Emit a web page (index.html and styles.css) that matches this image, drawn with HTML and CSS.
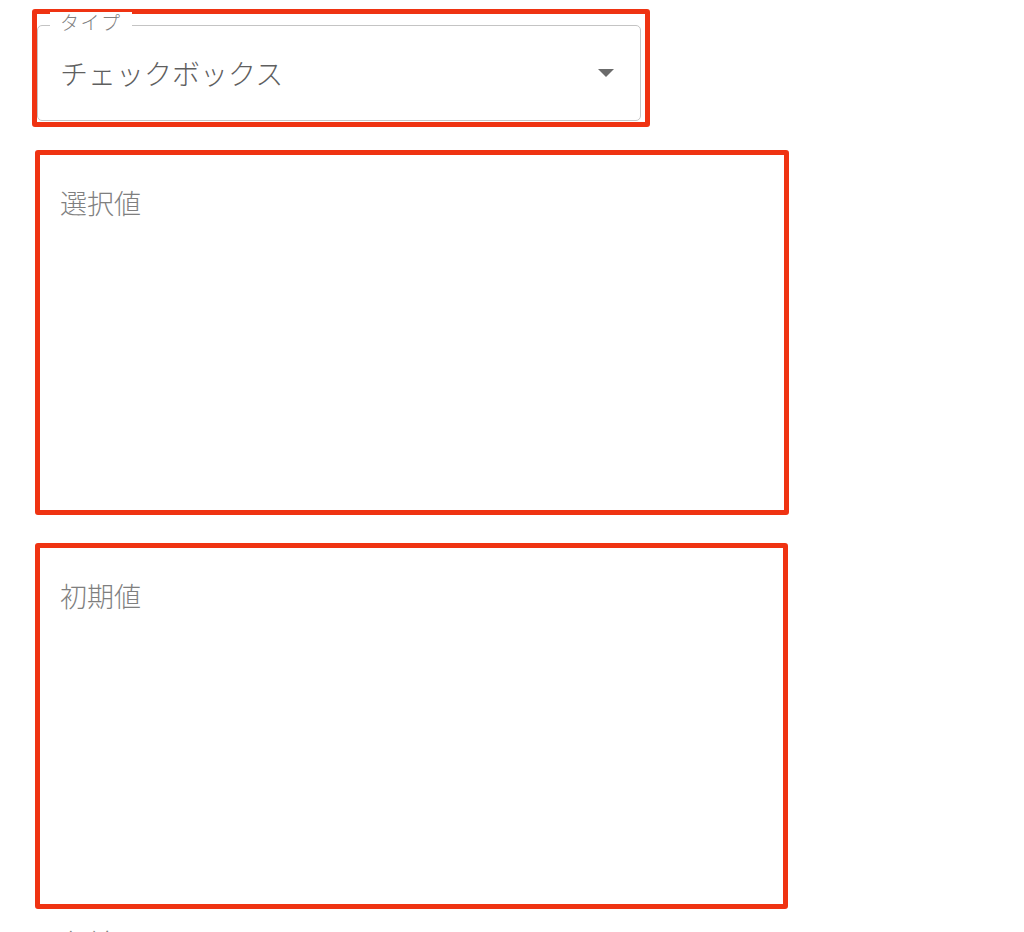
FILE: index.html
```html
<!DOCTYPE html>
<html lang="ja">
<head>
  <meta charset="UTF-8" />
  <meta name="viewport" content="width=device-width, initial-scale=1.0" />
  <title>項目設定</title>
  <link rel="stylesheet" href="styles.css">
</head>
<body>
  <div class="form">
    <div class="mark mark-type">
      <div class="field">
        <span class="field-label">タイプ</span>
        <span class="field-value">チェックボックス</span>
        <span class="arrow"></span>
      </div>
    </div>

    <div class="mark mark-area mark-choices">
      <div class="area-label">選択値</div>
    </div>

    <div class="mark mark-area mark-default">
      <div class="area-label">初期値</div>
    </div>

    <div class="next-label">名前</div>
  </div>
</body>
</html>
```

FILE: styles.css
```css
* {
  box-sizing: border-box;
}

html,
body {
  height: 932px;
  overflow: hidden;
}

body {
  margin: 0;
  background: #fff;
  font-family: "Noto Sans CJK JP", "Noto Sans", sans-serif;
  font-weight: 300;
  color: #7a7a7a;
}

.form {
  display: flex;
  flex-direction: column;
  align-items: flex-start;
  padding: 9px 0 0 32px;
}

/* red annotation frames */
.mark {
  border: 5px solid #ef3312;
  border-radius: 3px;
}

.mark-type {
  width: 618px;
  height: 118px;
  padding: 11px 4px 1px 0;
}

.field {
  position: relative;
  display: flex;
  align-items: center;
  height: 100%;
  padding: 0 26px 0 22px;
  border: 1px solid #c4c4c4;
  border-radius: 5px;
}

.field-label {
  position: absolute;
  top: -14px;
  left: 12px;
  padding: 0 10px;
  background: #fff;
  font-size: 19px;
  line-height: 19px;
  letter-spacing: 1.5px;
  color: #808080;
}

.field-value {
  flex: 1;
  font-size: 28px;
  line-height: 34px;
  color: #5f5f5f;
}

.arrow {
  width: 0;
  height: 0;
  border-left: 8px solid transparent;
  border-right: 8px solid transparent;
  border-top: 8px solid #6b6b6b;
}

.mark-area {
  margin-left: 3px;
  padding: 32px 20px;
}

.mark-choices {
  width: 754px;
  height: 365px;
  margin-top: 23px;
}

.mark-default {
  width: 753px;
  height: 366px;
  margin-top: 28px;
}

.area-label {
  font-size: 27px;
  line-height: 32px;
  color: #7f7f7f;
}

.next-label {
  margin: 18px 0 0 28px;
  font-size: 27px;
  line-height: 32px;
  color: #7f7f7f;
}
```
